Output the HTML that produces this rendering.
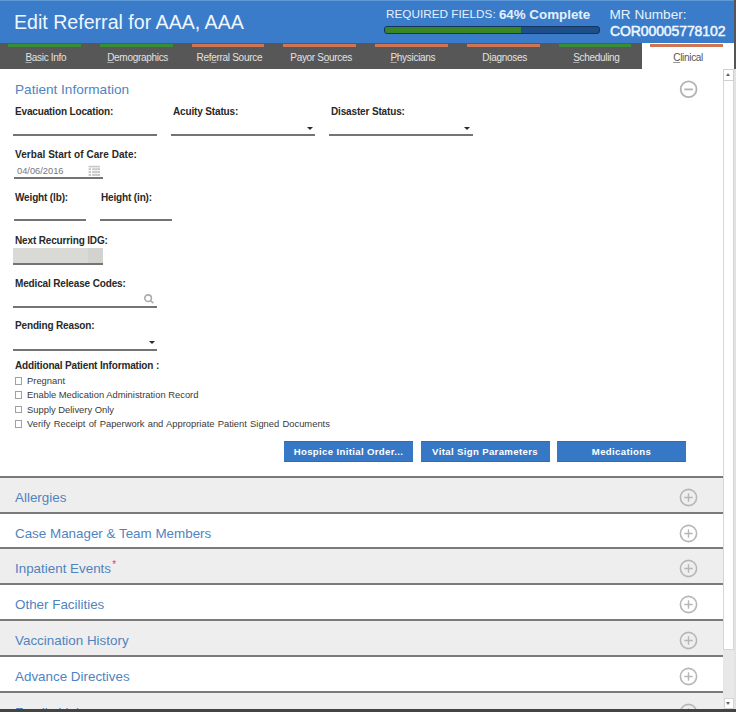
<!DOCTYPE html>
<html><head><meta charset="utf-8">
<style>
*{margin:0;padding:0;box-sizing:border-box}
html,body{width:736px;height:712px;overflow:hidden;background:#fff;font-family:"Liberation Sans",sans-serif}
.a{position:absolute}
#hdr{left:0;top:0;width:734px;height:43px;background:#3a7cc9;border-top:1px solid #5d9ad6}
#edge{left:734px;top:69px;width:2px;height:643px;background:#e2e2e2}
#edgeTop{left:734px;top:0;width:2px;height:69px;background:#555}
.title{left:14px;top:11px;font-size:19.6px;color:#eef6ff;white-space:nowrap}
.req{left:386px;top:6px;font-size:11.75px;letter-spacing:0;color:#e4f0fc;white-space:nowrap}
.req b{font-size:13.35px;position:relative;top:0.5px}
#bar{left:384px;top:26px;width:216px;height:8px;border-radius:3px;background:#1f4f88;border:1px solid #123660;overflow:hidden}
#bar div{width:136px;height:100%;background:#3a8526}
.mr{left:609.5px;top:6.5px;font-size:13.6px;color:#e8f2fc;white-space:nowrap}
.mrn{left:610px;top:22.5px;font-size:14px;color:#eef6ff;white-space:nowrap;letter-spacing:-0.1px;-webkit-text-stroke:0.5px #eef6ff}
#tabs{left:0;top:43px;width:734px;height:26px;background:#575757}
.tab{position:absolute;top:0;height:26px;width:91.75px;text-align:center;font-size:10px;letter-spacing:-0.3px;color:#e2e2e2;padding-top:8.5px}
.tab i{position:absolute;left:8px;right:11px;top:1px;height:2.5px;font-style:normal}
.g i{background:#3a8c36}
.r i{background:#cf7554}
.tab u{text-decoration:underline;text-underline-offset:1px;text-decoration-thickness:1px;text-decoration-color:rgba(220,220,220,.6)}
.tab.sel{background:#fff;color:#555}
.tab.sel u{text-decoration-color:rgba(80,80,80,.6)}
.sec{left:15px;font-size:13.6px;letter-spacing:0;color:#4f84bf;white-space:nowrap}
.lbl{font-size:10px;font-weight:bold;color:#282828;white-space:nowrap;letter-spacing:-0.15px}
.ul{height:2px;background:#747474}
.dd{width:0;height:0;border-left:3px solid transparent;border-right:3px solid transparent;border-top:3.5px solid #2a2a2a}
.cb{left:14.5px;width:7.5px;height:7.5px;border:1px solid #a0a0a0;background:#fff}
.ct{left:27px;font-size:9.4px;color:#3a3a3a;white-space:nowrap}
.btn{top:441px;height:21px;width:129px;background:#3678c5;border-top:1px solid #2f6cb2;border-bottom:1px solid #2f6cb2;color:#fff;font-size:9.6px;font-weight:bold;text-align:center;padding-top:4px;white-space:nowrap;letter-spacing:0.35px}
.row{left:0;width:723px;height:36px;border-top:2px solid #7a7a7a}
.row sup{color:#e04848;font-size:10px;position:absolute;top:-1px;right:-5px;line-height:1}
.row span{position:absolute;left:15px;top:12px;line-height:1.15;font-size:13.4px;color:#4f84bf;white-space:nowrap}
.gr{background:#eeeeee}
.ic{left:679px;width:19px;height:19px}
#sb{left:723px;top:69px;width:11px;height:643px;background:#e9e9e9}
</style></head><body>
<div id="hdr" class="a"></div>
<div class="a title">Edit Referral for AAA, AAA</div>
<div class="a req">REQUIRED FIELDS: <b>64% Complete</b></div>
<div id="bar" class="a"><div></div></div>
<div class="a mr">MR Number:</div>
<div class="a mrn">COR00005778102</div>
<div id="tabs" class="a">
 <div class="tab g" style="left:0"><i></i><u>B</u>asic Info</div>
 <div class="tab g" style="left:91.75px"><i></i><u>D</u>emographics</div>
 <div class="tab r" style="left:183.5px"><i></i>Ref<u>e</u>rral Source</div>
 <div class="tab r" style="left:275.25px"><i></i>Payor S<u>o</u>urces</div>
 <div class="tab r" style="left:367px"><i></i><u>P</u>hysicians</div>
 <div class="tab r" style="left:458.75px"><i></i>D<u>i</u>agnoses</div>
 <div class="tab g" style="left:550.5px"><i></i><u>S</u>cheduling</div>
 <div class="tab r sel" style="left:642.25px"><i></i><u>C</u>linical</div>
</div>
<div id="edgeTop" class="a"></div>
<div id="edge" class="a"></div>

<div class="a sec" style="top:82px">Patient Information</div>
<svg class="a" style="left:679px;top:79.5px" width="19" height="19" viewBox="0 0 19 19"><circle cx="9.6" cy="9.3" r="7.9" fill="none" stroke="#b3b3b3" stroke-width="1.8"/><line x1="5.3" y1="9.4" x2="13.9" y2="9.4" stroke="#b3b3b3" stroke-width="1.8"/></svg>

<div class="a lbl" style="left:15px;top:106px">Evacuation Location:</div>
<div class="a ul" style="left:13px;top:134px;width:144px"></div>
<div class="a lbl" style="left:173px;top:106px">Acuity Status:</div>
<div class="a ul" style="left:171px;top:134px;width:144px"></div>
<div class="a dd" style="left:306.5px;top:126.5px"></div>
<div class="a lbl" style="left:331px;top:106px">Disaster Status:</div>
<div class="a ul" style="left:329px;top:134px;width:144px"></div>
<div class="a dd" style="left:463.5px;top:126.5px"></div>

<div class="a lbl" style="left:15px;top:149px;letter-spacing:0.05px">Verbal Start of Care Date:</div>
<div class="a" style="left:17px;top:165.5px;font-size:9.3px;color:#777">04/06/2016</div>
<svg class="a" style="left:88px;top:165px" width="13" height="12" viewBox="0 0 13 12"><g fill="#c6c6c6"><rect x="0.6" y="0.8" width="11.4" height="1.6"/><rect x="0.6" y="3.2" width="2.4" height="2"/><rect x="4.2" y="3.2" width="7.8" height="2"/><rect x="0.6" y="6.1" width="2.4" height="2"/><rect x="4.2" y="6.1" width="7.8" height="2"/><rect x="0.6" y="9" width="2.4" height="2"/><rect x="4.2" y="9" width="7.8" height="2"/></g><g fill="#e4e4e4"><rect x="6.6" y="3.2" width="0.6" height="8"/><rect x="9.2" y="3.2" width="0.6" height="8"/></g></svg>
<div class="a ul" style="left:14px;top:177px;width:89px"></div>

<div class="a lbl" style="left:15px;top:192px">Weight (lb):</div>
<div class="a ul" style="left:14px;top:219px;width:72px"></div>
<div class="a lbl" style="left:101px;top:192px">Height (in):</div>
<div class="a ul" style="left:100px;top:219px;width:72px"></div>

<div class="a lbl" style="left:15px;top:235px">Next Recurring IDG:</div>
<div class="a" style="left:13px;top:248px;width:90px;height:15px;background:#d9d9d6"></div>
<div class="a" style="left:88px;top:248px;width:15px;height:15px;background:#d2d2cf"></div>
<div class="a ul" style="left:13px;top:263px;width:90px"></div>

<div class="a lbl" style="left:15px;top:278px">Medical Release Codes:</div>
<svg class="a" style="left:144px;top:294px" width="11" height="10" viewBox="0 0 11 10"><circle cx="4.1" cy="4.2" r="3.3" fill="none" stroke="#ababab" stroke-width="1.6"/><line x1="6.5" y1="6.6" x2="9.4" y2="9.2" stroke="#b0b0b0" stroke-width="1.7"/></svg>
<div class="a ul" style="left:13px;top:306px;width:144px"></div>

<div class="a lbl" style="left:15px;top:320px">Pending Reason:</div>
<div class="a dd" style="left:148.5px;top:340.5px"></div>
<div class="a ul" style="left:13px;top:349px;width:144px"></div>

<div class="a lbl" style="left:15px;top:360px">Additional Patient Information :</div>
<div class="a cb" style="top:377px"></div><div class="a ct" style="top:375px">Pregnant</div>
<div class="a cb" style="top:391px"></div><div class="a ct" style="top:389px">Enable Medication Administration Record</div>
<div class="a cb" style="top:405.5px"></div><div class="a ct" style="top:404px">Supply Delivery Only</div>
<div class="a cb" style="top:420px"></div><div class="a ct" style="top:418px;word-spacing:0.6px">Verify Receipt of Paperwork and Appropriate Patient Signed Documents</div>

<div class="a btn" style="left:284px">Hospice Initial Order...</div>
<div class="a btn" style="left:420.5px">Vital Sign Parameters</div>
<div class="a btn" style="left:557px">Medications</div>

<div class="a row gr" style="top:476px"><span>Allergies</span></div>
<div class="a row" style="top:512px"><span>Case Manager &amp; Team Members</span></div>
<div class="a row gr" style="top:547px"><span>Inpatient Events<sup>*</sup></span></div>
<div class="a row" style="top:583px"><span>Other Facilities</span></div>
<div class="a row gr" style="top:619px"><span>Vaccination History</span></div>
<div class="a row" style="top:655px"><span>Advance Directives</span></div>
<div class="a row gr" style="top:691px"><span>Family Links</span></div>
<svg class="a" style="left:679px;top:488px" width="19" height="19" viewBox="0 0 19 19"><circle cx="9.5" cy="9.5" r="8.1" fill="none" stroke="#b6b6b6" stroke-width="1.6"/><path d="M5.3 9.5H13.7M9.5 5.3V13.7" stroke="#b6b6b6" stroke-width="1.4"/></svg>
<svg class="a" style="left:679px;top:524px" width="19" height="19" viewBox="0 0 19 19"><circle cx="9.5" cy="9.5" r="8.1" fill="none" stroke="#b6b6b6" stroke-width="1.6"/><path d="M5.3 9.5H13.7M9.5 5.3V13.7" stroke="#b6b6b6" stroke-width="1.4"/></svg>
<svg class="a" style="left:679px;top:559px" width="19" height="19" viewBox="0 0 19 19"><circle cx="9.5" cy="9.5" r="8.1" fill="none" stroke="#b6b6b6" stroke-width="1.6"/><path d="M5.3 9.5H13.7M9.5 5.3V13.7" stroke="#b6b6b6" stroke-width="1.4"/></svg>
<svg class="a" style="left:679px;top:595px" width="19" height="19" viewBox="0 0 19 19"><circle cx="9.5" cy="9.5" r="8.1" fill="none" stroke="#b6b6b6" stroke-width="1.6"/><path d="M5.3 9.5H13.7M9.5 5.3V13.7" stroke="#b6b6b6" stroke-width="1.4"/></svg>
<svg class="a" style="left:679px;top:631px" width="19" height="19" viewBox="0 0 19 19"><circle cx="9.5" cy="9.5" r="8.1" fill="none" stroke="#b6b6b6" stroke-width="1.6"/><path d="M5.3 9.5H13.7M9.5 5.3V13.7" stroke="#b6b6b6" stroke-width="1.4"/></svg>
<svg class="a" style="left:679px;top:667px" width="19" height="19" viewBox="0 0 19 19"><circle cx="9.5" cy="9.5" r="8.1" fill="none" stroke="#b6b6b6" stroke-width="1.6"/><path d="M5.3 9.5H13.7M9.5 5.3V13.7" stroke="#b6b6b6" stroke-width="1.4"/></svg>
<svg class="a" style="left:679px;top:703px" width="19" height="19" viewBox="0 0 19 19"><circle cx="9.5" cy="9.5" r="8.1" fill="none" stroke="#b6b6b6" stroke-width="1.6"/><path d="M5.3 9.5H13.7M9.5 5.3V13.7" stroke="#b6b6b6" stroke-width="1.4"/></svg>
<div class="a" style="left:723px;top:69px;width:11px;height:640px;background:#e8e8e8"></div>
<div class="a" style="left:723px;top:69px;width:11px;height:12px;background:#fff;border:1px solid #cfcfcf"></div>
<div class="a" style="left:726px;top:73px;width:0;height:0;border-left:2.5px solid transparent;border-right:2.5px solid transparent;border-bottom:3px solid #666"></div>
<div class="a" style="left:723px;top:80px;width:11px;height:570px;background:#fff;border:1px solid #d6d6d6;border-top:1px solid #cfcfcf"></div>
<div class="a" style="left:723.5px;top:698px;width:10.5px;height:11px;background:#fff;border:1px solid #d6d6d6"></div>
<div class="a" style="left:726px;top:702px;width:0;height:0;border-left:2.5px solid transparent;border-right:2.5px solid transparent;border-top:3px solid #666"></div>

<div class="a" style="left:0;top:709px;width:736px;height:3px;background:#444"></div>
</body></html>
